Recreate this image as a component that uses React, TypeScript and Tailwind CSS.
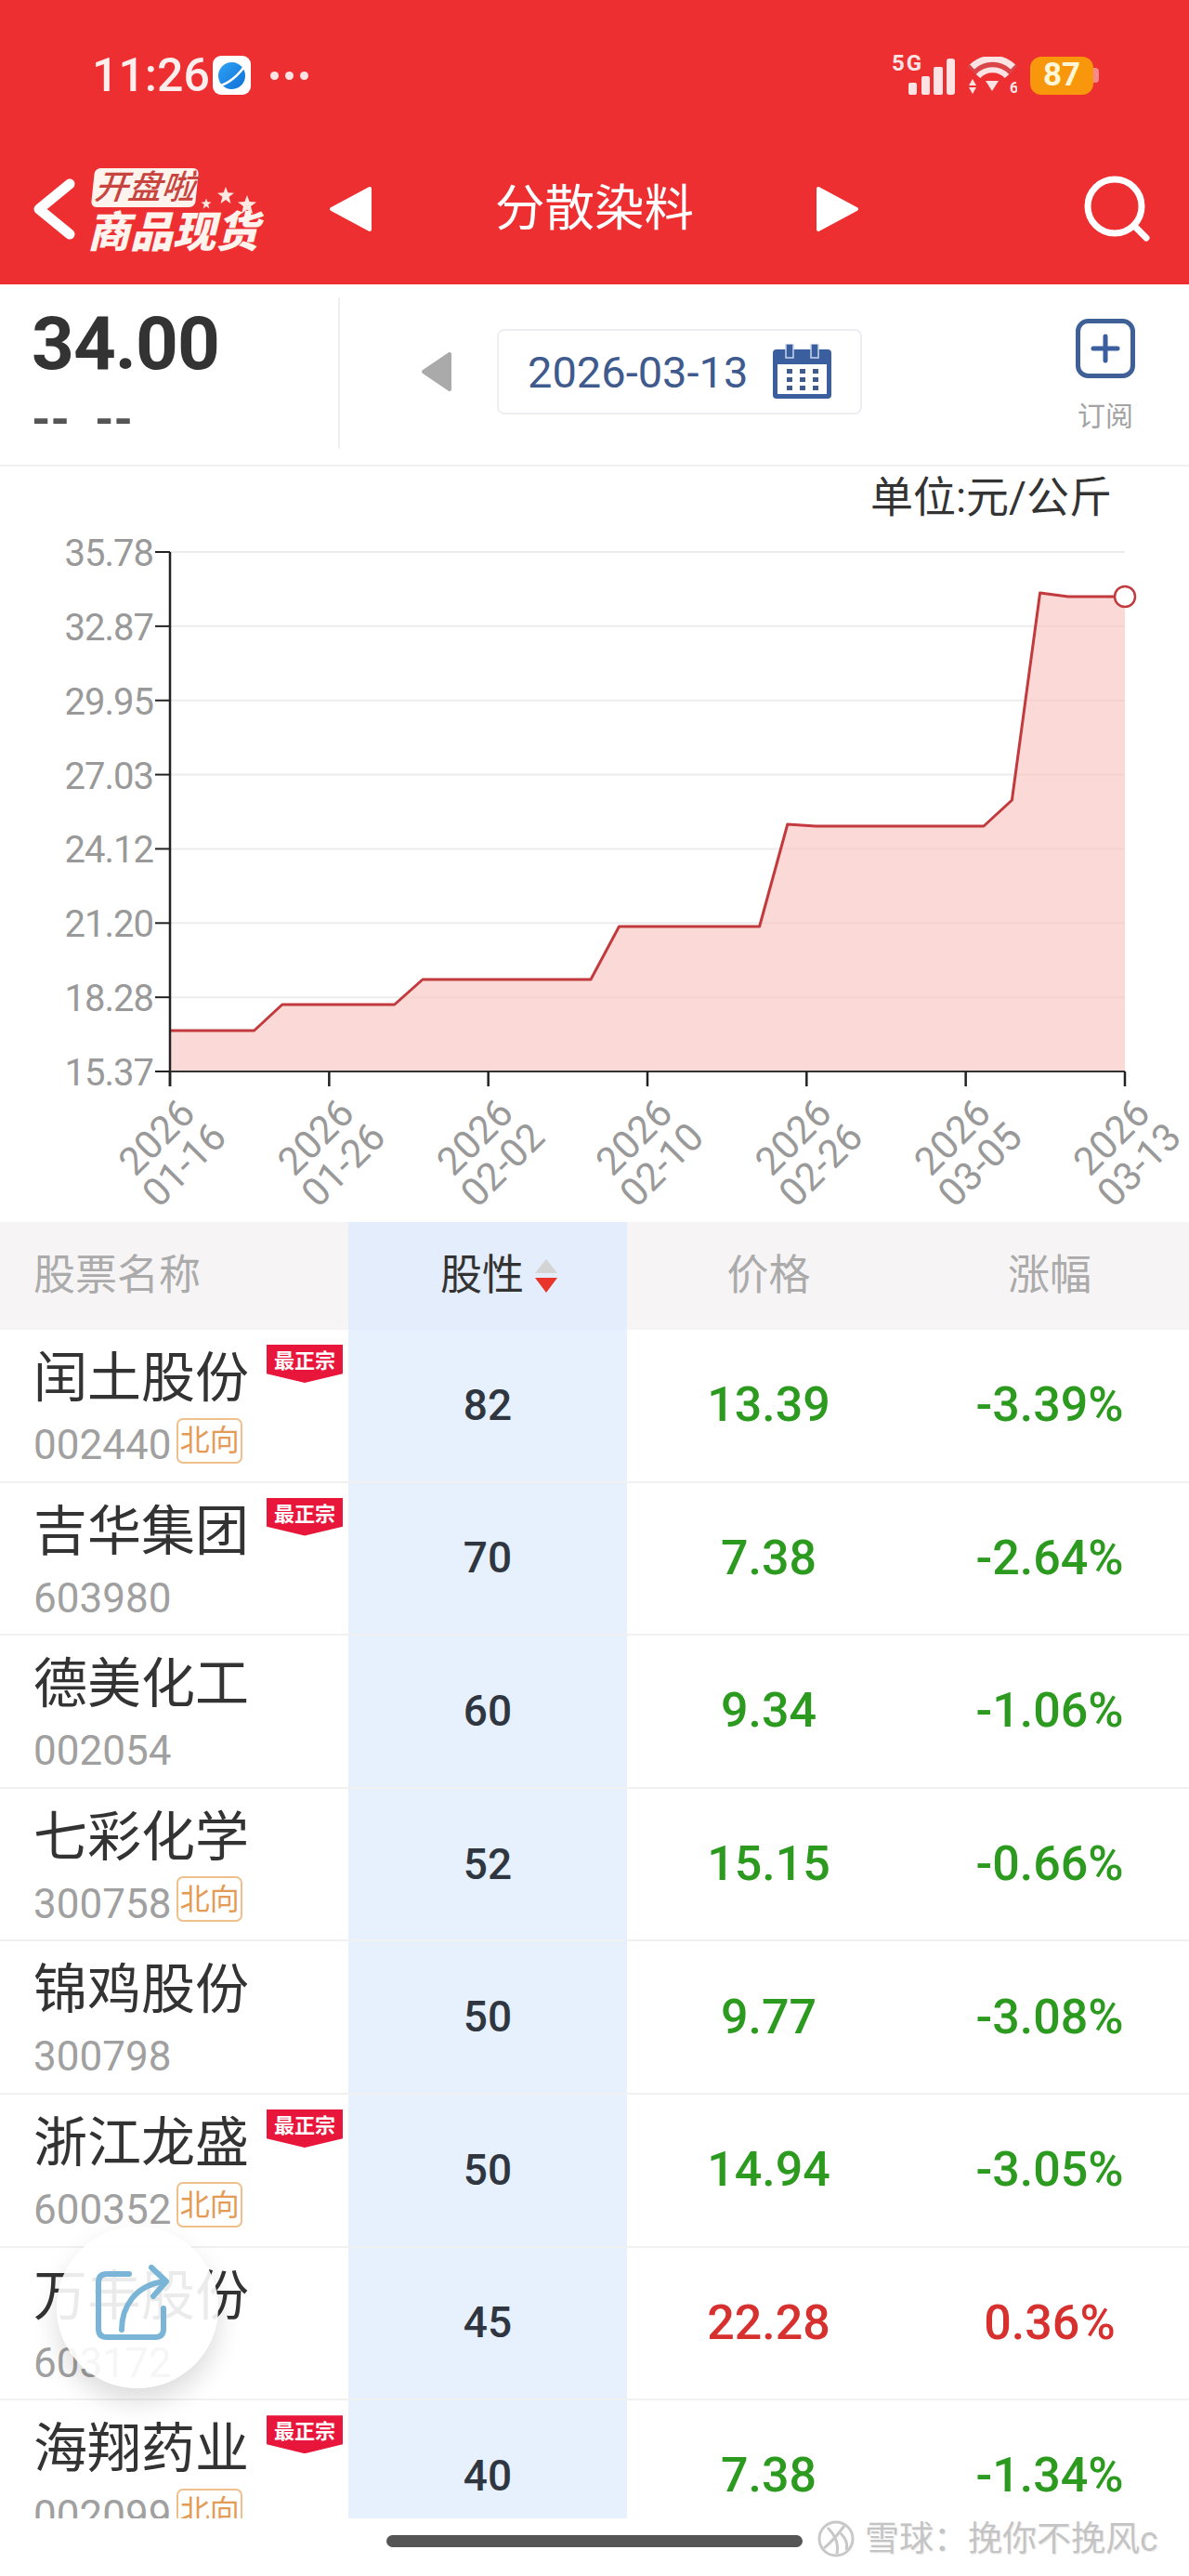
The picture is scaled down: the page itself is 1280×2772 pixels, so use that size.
const rows = [
  { name: "闰土股份", code: "002440", north: true, best: true, score: "82", price: "13.39", change: "-3.39%" },
  { name: "吉华集团", code: "603980", north: false, best: true, score: "70", price: "7.38", change: "-2.64%" },
  { name: "德美化工", code: "002054", north: false, best: false, score: "60", price: "9.34", change: "-1.06%" },
  { name: "七彩化学", code: "300758", north: true, best: false, score: "52", price: "15.15", change: "-0.66%" },
  { name: "锦鸡股份", code: "300798", north: false, best: false, score: "50", price: "9.77", change: "-3.08%" },
  { name: "浙江龙盛", code: "600352", north: true, best: true, score: "50", price: "14.94", change: "-3.05%" },
  { name: "万丰股份", code: "603172", north: false, best: false, score: "45", price: "22.28", change: "0.36%" },
  { name: "海翔药业", code: "002099", north: true, best: true, score: "40", price: "7.38", change: "-1.34%" },
];

const yLabels = ["35.78", "32.87", "29.95", "27.03", "24.12", "21.20", "18.28", "15.37"];
const xLabels = ["01-16", "01-26", "02-02", "02-10", "02-26", "03-05", "03-13"];
const linePoints =
  "183,1111 273.6,1111 303.8,1083 424.7,1083 455,1056 636,1056 666.5,999 817.6,999 847.8,889 878,891 1059,891 1089.4,863 1119.6,640 1149.8,644 1211,644";

function SignalIcon() {
  return (
    <svg width="68" height="44" viewBox="0 0 68 44" className="shrink-0">
      <text x="0" y="17" fontSize="24" fontWeight="700" fill="#fde3e3" textLength="32">5G</text>
      <rect x="18" y="30" width="9" height="13" rx="2" fill="#fde3e3" />
      <rect x="32" y="23" width="9" height="20" rx="2" fill="#fde3e3" />
      <rect x="45" y="13" width="10" height="30" rx="2" fill="#fde3e3" />
      <rect x="59" y="4" width="9" height="39" rx="3" fill="#fde3e3" />
    </svg>
  );
}

function WifiIcon() {
  return (
    <svg width="53" height="40" viewBox="0 0 53 40" className="shrink-0">
      <path d="M4 15 A32 32 0 0 1 49 15" fill="none" stroke="#d94548" strokeWidth="14" />
      <path d="M4.5 11 A32 32 0 0 1 48.5 11" fill="none" stroke="#fde3e3" strokeWidth="7" />
      <path d="M11 21 A21 21 0 0 1 42 21" fill="none" stroke="#fde3e3" strokeWidth="6" />
      <path d="M19 26 L33 26 L26 37 Z" fill="#fde3e3" strokeLinejoin="round" />
      <path d="M1 31 L5 24 L9 31 Z M1 33 L9 33 L5 40 Z" fill="#fde3e3" />
      <text x="45" y="39" fontSize="16" fontWeight="700" fill="#fde3e3">6</text>
    </svg>
  );
}

function PlanetIcon() {
  return (
    <div className="flex h-[42px] w-[41px] items-center justify-center rounded-[9px] bg-white">
      <svg width="35" height="35" viewBox="0 0 35 35">
        <defs>
          <linearGradient id="planet" x1="0" y1="0" x2="1" y2="1">
            <stop offset="0" stopColor="#2fa3f5" />
            <stop offset="1" stopColor="#0f6fd8" />
          </linearGradient>
        </defs>
        <circle cx="17.5" cy="17.5" r="14.5" fill="url(#planet)" />
        <path d="M5 28 C14 26 26 16 32 6" fill="none" stroke="#ffffff" strokeWidth="2.5" />
      </svg>
    </div>
  );
}

function LogoStars() {
  const star = "M0 -10 L2.6 -3 L10 -2.5 L4 2 L6 10 L0 5.5 L-6 10 L-4 2 L-10 -2.5 L-2.6 -3 Z";
  return (
    <svg width="70" height="40" viewBox="0 0 70 40" className="absolute left-[120px] top-[14px]">
      <path d={star} transform="translate(8 24) scale(0.55)" fill="#ffe9e0" />
      <path d={star} transform="translate(29 15) scale(0.9)" fill="#ffe9e0" />
      <path d={star} transform="translate(52 25) scale(1)" fill="#ffe9e0" />
    </svg>
  );
}

function SaleBadge() {
  return (
    <div className="absolute right-[6px] top-[16px] flex h-[41px] w-[82px] justify-center bg-[#e8163a] pt-[7px] text-[22px] font-bold leading-[22px] text-white [clip-path:polygon(0_0,100%_0,100%_76%,50%_100%,0_76%)]">
      最正宗
    </div>
  );
}

function NorthTag() {
  return (
    <span className="-mt-[10px] flex h-[49px] w-[71px] items-center justify-center rounded-[7px] border-2 border-[#eec08c] text-[32px] leading-none text-[#e49b55]">
      北向
    </span>
  );
}

function StockRow({ row }: { row: (typeof rows)[number] }) {
  const up = !row.change.startsWith("-");
  const tone = up ? "text-[#d6302f]" : "text-[#2b9a1f]";
  return (
    <div className="grid h-[164.6px] shrink-0 grid-cols-[375px_300px_305px_300px] border-b-2 border-[#f1f1f1]">
      <div className="relative pl-[36px] pt-[23px]">
        <div className="text-[58px] leading-[58px] text-[#333333]">{row.name}</div>
        <div className="mt-[21px] flex items-center gap-[6px]">
          <span className="text-[44px] leading-[44px] text-[#a0a0a0]">{row.code}</span>
          {row.north && <NorthTag />}
        </div>
        {row.best && <SaleBadge />}
      </div>
      <div className="flex items-center justify-center bg-[#e6f1fd] text-[46px] font-medium text-[#2f3640]">{row.score}</div>
      <div className={`flex items-center justify-center text-[52px] font-medium ${tone}`}>{row.price}</div>
      <div className={`flex items-center justify-center text-[52px] font-medium ${tone}`}>{row.change}</div>
    </div>
  );
}

function PriceChart() {
  return (
    <svg viewBox="0 570 1280 747" width="1280" height="747" className="block">
      {yLabels.map((label, i) => {
        const y = 596 + i * 79.86;
        return (
          <g key={label}>
            {i < 7 && <line x1="183" x2="1211" y1={y} y2={y} stroke="#ececec" strokeWidth="2" />}
            <line x1="167" x2="183" y1={y} y2={y} stroke="#222222" strokeWidth="2" />
            <text x="165" y={y + 15} textAnchor="end" fontSize="40" letterSpacing="-1" fill="#999999">{label}</text>
          </g>
        );
      })}
      <polygon points={`${linePoints} 1211,1155 183,1155`} fill="#f9c4c0" fillOpacity="0.65" />
      <polyline points={linePoints} fill="none" stroke="#c23a3d" strokeWidth="3" strokeLinejoin="round" />
      <line x1="183" x2="183" y1="596" y2="1171" stroke="#222222" strokeWidth="2.5" />
      <line x1="183" x2="1211" y1="1155" y2="1155" stroke="#333333" strokeWidth="2" />
      {xLabels.map((label, i) => {
        const x = 183 + i * 171.33;
        return (
          <g key={label}>
            <line x1={x} x2={x} y1="1155" y2="1171" stroke="#222222" strokeWidth="2.5" />
            <g transform={`translate(${x} 1240) rotate(-45)`} fontSize="42" fill="#999999" textAnchor="middle">
              <text y="-6">2026</text>
              <text y="36">{label}</text>
            </g>
          </g>
        );
      })}
      <circle cx="1211" cy="644" r="11" fill="#ffffff" stroke="#c23a3d" strokeWidth="2.5" />
    </svg>
  );
}

export default function App() {
  return (
    <div className="relative flex h-[2772px] w-[1280px] flex-col overflow-hidden bg-white font-[Roboto,'Noto_Sans_CJK_SC',sans-serif]">
      <header className="h-[306px] shrink-0 bg-[#ee2f32] pt-[59px] text-white">
        <div className="flex h-[44px] items-center pl-[99px] pr-[97px]">
          <span className="w-[109px] text-[50px] font-medium leading-none text-[#fdeeee]">11:26</span>
          <span className="ml-[21px]"><PlanetIcon /></span>
          <span className="ml-[21px] flex gap-[7px]">
            <i className="h-[9px] w-[9px] rounded-full bg-[#fde3e3]" />
            <i className="h-[9px] w-[9px] rounded-full bg-[#fde3e3]" />
            <i className="h-[9px] w-[9px] rounded-full bg-[#fde3e3]" />
          </span>
          <div className="ml-auto flex items-center gap-[14px]">
            <SignalIcon />
            <WifiIcon />
            <div className="flex items-center">
              <div className="flex h-[41px] w-[68px] items-center justify-center rounded-[12px] bg-[#f9970c] text-[35px] font-bold text-[#fff6d8]">87</div>
              <div className="h-[16px] w-[6px] rounded-r-[4px] bg-[#f78a8a]" />
            </div>
          </div>
        </div>
        <nav className="mt-[81px] flex h-[82px] items-center pl-[35px]">
          <svg width="46" height="66" viewBox="0 0 46 66" className="shrink-0">
            <path d="M40 6 L7 33 L40 60" fill="none" stroke="#ffffff" strokeWidth="11" strokeLinecap="round" strokeLinejoin="round" />
          </svg>
          <div className="relative ml-[13px] h-[88px] w-[190px] shrink-0">
            <div className="ml-[6px] flex h-[42px] w-[112px] -skew-x-6 items-center justify-center rounded-[6px] bg-[#fff3ee] text-[36px] font-medium italic leading-none text-[#c8453f]">
              开盘啦
            </div>
            <div className="mt-[9px] whitespace-nowrap text-[46px] font-black italic leading-[37px] text-[#fff3ee]">商品现货</div>
            <LogoStars />
          </div>
          <svg width="48" height="52" viewBox="0 0 48 52" className="ml-[69px] shrink-0">
            <path d="M45 4 L45 48 L4 26 Z" fill="#ffffff" stroke="#ffffff" strokeWidth="4" strokeLinejoin="round" />
          </svg>
          <h1 className="ml-[132px] w-[214px] whitespace-nowrap text-[53.5px] font-normal leading-none">分散染料</h1>
          <svg width="48" height="52" viewBox="0 0 48 52" className="ml-[131px] shrink-0">
            <path d="M3 4 L3 48 L44 26 Z" fill="#ffffff" stroke="#ffffff" strokeWidth="4" strokeLinejoin="round" />
          </svg>
          <svg width="72" height="72" viewBox="0 0 72 72" className="ml-[240px] shrink-0">
            <circle cx="34" cy="33" r="29" fill="none" stroke="#ffffff" strokeWidth="7" />
            <path d="M55 54 L68 67" stroke="#ffffff" strokeWidth="7" strokeLinecap="round" />
          </svg>
        </nav>
      </header>

      <section className="flex h-[196px] shrink-0 border-b-2 border-[#f0f0f0]">
        <div className="mt-[14px] h-[163px] w-[366px] shrink-0 border-r-2 border-[#f0f0f0] pl-[34px] pt-[11px]">
          <div className="text-[80px] font-bold leading-[78px] tracking-[-1px] text-[#333333]">34.00</div>
          <div className="mt-[17px] flex gap-[27px] text-[52px] font-bold leading-[52px] text-[#555555]">
            <span>--</span>
            <span>--</span>
          </div>
        </div>
        <div className="flex flex-1 items-center pb-[6px]">
          <svg width="34" height="44" viewBox="0 0 34 44" className="ml-[87px] shrink-0">
            <path d="M31 3 L31 41 L3 22 Z" fill="#aaaaaa" stroke="#aaaaaa" strokeWidth="4" strokeLinejoin="round" />
          </svg>
          <div className="ml-[48px] flex h-[92px] w-[393px] items-center rounded-[8px] border-2 border-[#eeeef2] pl-[31px]">
            <span className="w-[249px] text-[47px] leading-none text-[#3f5a8c]">2026-03-13</span>
            <svg width="64" height="60" viewBox="0 0 64 60" className="ml-[14px] shrink-0">
              <rect x="1" y="6" width="63" height="53" rx="4" fill="#3b5f9e" />
              <rect x="6" y="22" width="53" height="32" fill="#ffffff" />
              <rect x="15" y="0" width="8" height="15" fill="#3b5f9e" stroke="#c9d6ee" strokeWidth="1.5" />
              <rect x="42" y="0" width="8" height="15" fill="#3b5f9e" stroke="#c9d6ee" strokeWidth="1.5" />
              {[16, 30, 44].map((x) =>
                [27, 36, 45].map((y) => <rect key={`${x}-${y}`} x={x} y={y} width="6" height="5" fill="#3f5a8c" />),
              )}
            </svg>
          </div>
          <div className="ml-auto mr-[58px] mt-[6px] flex w-[64px] flex-col items-center">
            <svg width="64" height="64" viewBox="0 0 64 64">
              <rect x="2.5" y="2.5" width="59" height="59" rx="11" fill="none" stroke="#3f5f97" strokeWidth="5" />
              <path d="M32 19 V45 M19 32 H45" stroke="#3b5f9e" strokeWidth="5" strokeLinecap="round" />
            </svg>
            <span className="mt-[25px] whitespace-nowrap text-[30px] leading-[32px] text-[#a3a3a3]">订阅</span>
          </div>
        </div>
      </section>

      <section className="shrink-0">
        <div className="flex h-[66px] items-center justify-end pr-[83px] text-[46px] leading-none text-[#333333]">单位:元/公斤</div>
        <PriceChart />
      </section>

      <section className="flex h-[1395px] shrink-0 flex-col overflow-hidden">
        <div className="grid h-[116px] shrink-0 grid-cols-[375px_300px_305px_300px] bg-[#f6f4f5] text-[45px] text-[#ababab]">
          <div className="flex items-center pl-[36px]">股票名称</div>
          <div className="flex items-center justify-center gap-[12px] bg-[#e3edfb] text-[#333333]">
            <span className="ml-[24px]">股性</span>
            <svg width="24" height="36" viewBox="0 0 24 36">
              <path d="M12 0 L24 15 L0 15 Z" fill="#d4d4d4" />
              <path d="M0 20 L24 20 L12 36 Z" fill="#e8342a" />
            </svg>
          </div>
          <div className="flex items-center justify-center">价格</div>
          <div className="flex items-center justify-center">涨幅</div>
        </div>
        {rows.map((row) => (
          <StockRow key={row.code} row={row} />
        ))}
      </section>

      <div className="flex flex-1 justify-center pt-[18px]">
        <div className="h-[13px] w-[448px] rounded-full bg-[#555555]" />
      </div>

      {/* floating share button, sits over the list */}
      <div className="absolute left-[61px] top-[2396px] flex h-[174px] w-[174px] items-center justify-center rounded-full bg-white/90 shadow-[0_14px_28px_rgba(0,0,0,0.14)]">
        <svg width="84" height="82" viewBox="0 0 84 82" className="ml-[-6px] mt-[-10px]">
          <path d="M36 10 H12 Q3 10 3 19 V69 Q3 78 12 78 H64 Q73 78 73 69 V47" fill="none" stroke="#7ab5d8" strokeWidth="6" strokeLinecap="round" />
          <path d="M28 70 C28 46 42 22 74 18" fill="none" stroke="#7ab5d8" strokeWidth="6" strokeLinecap="round" />
          <path d="M60 3 L76 18 L62 34" fill="none" stroke="#7ab5d8" strokeWidth="6" strokeLinecap="round" strokeLinejoin="round" />
        </svg>
      </div>

      {/* watermark */}
      <div className="absolute left-[879px] top-[2712px] flex h-[40px] items-center gap-[10px] text-[37px] leading-none text-[#c4c4c4] [text-shadow:0_0_2px_#ffffff,1px_1px_1px_#e0e0e0]">
        <svg width="42" height="40" viewBox="0 0 42 40" className="shrink-0">
          <circle cx="21" cy="20" r="18" fill="none" stroke="#c8c8c8" strokeWidth="3" />
          <path d="M12 8 C20 16 24 26 22 36 M30 6 C24 14 16 24 8 30 M26 14 C32 20 34 26 32 32" fill="none" stroke="#c8c8c8" strokeWidth="3" />
        </svg>
        <span className="whitespace-nowrap">雪球：挽你不挽风c</span>
      </div>
    </div>
  );
}
